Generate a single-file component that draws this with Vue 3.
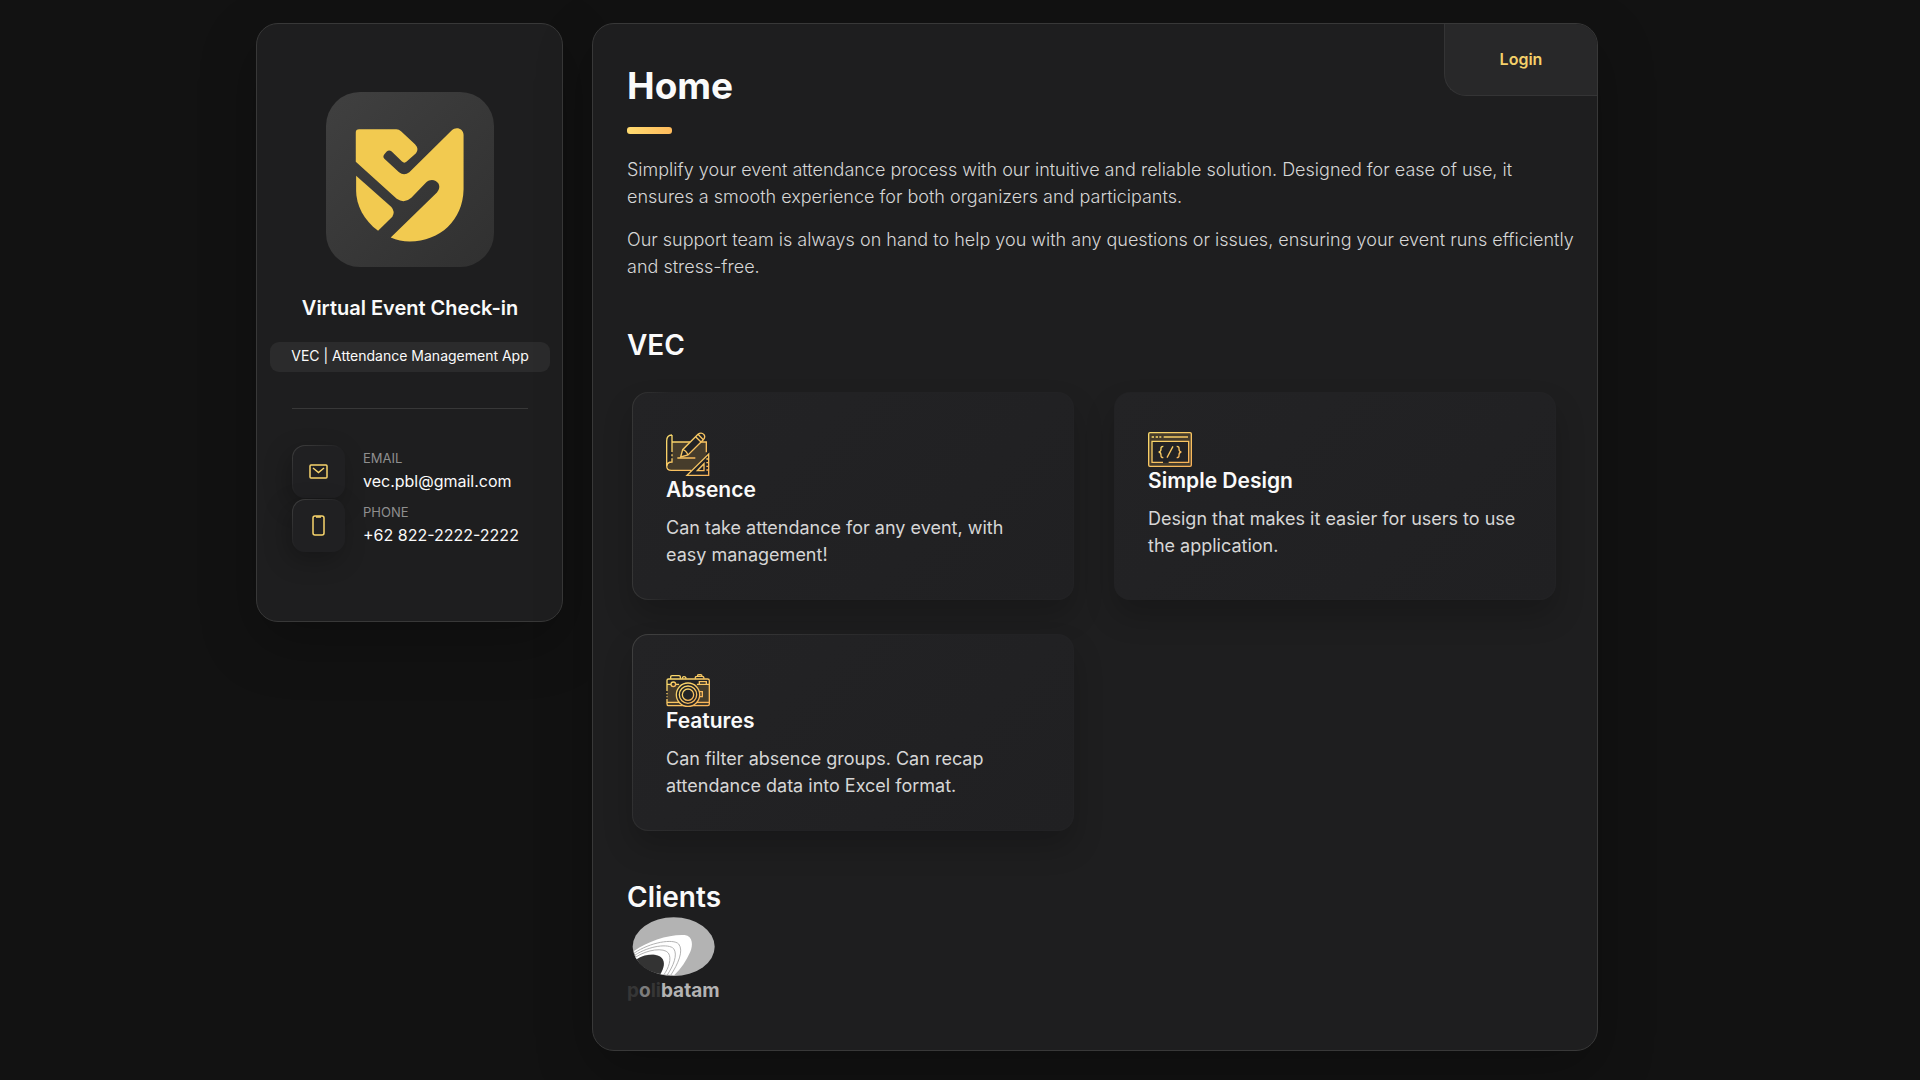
<script setup>
const contacts = [
  { kind: 'mail', label: 'Email', value: 'vec.pbl@gmail.com', href: 'mailto:vec.pbl@gmail.com' },
  { kind: 'phone', label: 'Phone', value: '+62 822-2222-2222', href: 'tel:+6282222222222' },
]

const services = [
  { icon: 'plan', title: 'Absence', text: 'Can take attendance for any event, with easy management!', edge: 'edge-left' },
  { icon: 'code', title: 'Simple Design', text: 'Design that makes it easier for users to use the application.', edge: '' },
  { icon: 'camera', title: 'Features', text: 'Can filter absence groups. Can recap attendance data into Excel format.', edge: 'edge-full' },
]
</script>

<template>
  <div class="page">
    <svg class="defs" width="0" height="0" aria-hidden="true">
      <linearGradient id="gold" x1="0" y1="0" x2="1" y2="1">
        <stop offset="0" stop-color="#f8da6c" />
        <stop offset="1" stop-color="#f8b158" />
      </linearGradient>
    </svg>

    <div class="layout">
      <aside class="panel sidebar">
        <div class="avatar">
          <svg viewBox="49 35 500 526" role="img" aria-label="VEC logo">
            <path fill="#f2ca50" d="M146 147H258Q266 147 272 153L314 192Q327 206 317 219L289 244Q282 251 275 244L244 214Q236 207 229 214L222 222Q216 229 222 236L266 276Q281 289 297 276L424 151C438 137 460 146 460 164V328C458 420 390 484 298 484Q268 484 241 472L380 337Q391 324 385 311C377 298 360 296 348 306L303 353Q282 372 259 356L136 245V157Q136 147 146 147Z" />
            <path fill="#f2ca50" d="M137 287L243 381Q255 395 246 410L203 452C160 420 137 375 137 330Z" />
          </svg>
        </div>
        <h1 class="name">Virtual Event Check-in</h1>
        <p class="tagline">VEC | Attendance Management App</p>
        <hr class="rule" />
        <ul class="contacts">
          <li v-for="c in contacts" :key="c.kind" class="contact">
            <span class="icon-box">
              <svg v-if="c.kind === 'mail'" width="19" height="15" viewBox="0 0 19 15">
                <rect x="1" y="1" width="17" height="13" rx="1" />
                <path d="M4 4L9.5 8.5L15 4" />
              </svg>
              <svg v-else width="13" height="21" viewBox="4 0 13 21">
                <rect x="5" y="1" width="11" height="19" rx="2" />
                <path d="M8 2H13" />
              </svg>
            </span>
            <span class="contact-info">
              <span class="contact-label">{{ c.label }}</span>
              <a class="contact-link" :href="c.href">{{ c.value }}</a>
            </span>
          </li>
        </ul>
      </aside>

      <main class="panel content">
        <nav class="login"><a href="#login">Login</a></nav>

        <header>
          <h2 class="title">Home</h2>
        </header>

        <section class="about">
          <p>Simplify your event attendance process with our intuitive and reliable solution. Designed for ease of use, it ensures a smooth experience for both organizers and participants.</p>
          <p>Our support team is always on hand to help you with any questions or issues, ensuring your event runs efficiently and stress-free.</p>
        </section>

        <section>
          <h3 class="subtitle">VEC</h3>
          <ul class="services">
            <li v-for="s in services" :key="s.title" class="card" :class="s.edge">
              <svg v-if="s.icon === 'plan'" class="glyph" width="44" height="44" viewBox="140 155 132 132">
                <path class="tint" d="M158 185H261V226L216 270H152L144 258L158 245Z" />
                <path d="M158 164C147 164 142 171 142 182V256C142 265 147 270 156 270H216M158 164V215M158 222V228M158 234V245C148 245 143 250 143 258M158 185H212M240 185H261V216" />
                <path class="dark" d="M184 230L190 208L236 162Q246 154 254 163Q259 171 252 178L206 224Z" />
                <path d="M190 208Q200 210 206 224M229 169L245 185M236 162L252 178M174 233H228" />
                <path class="dark" d="M268 221V285H203Z" />
                <path d="M254 250V271H234ZM261 236H266M261 247H266M261 258H266M261 269H266" />
              </svg>
              <svg v-else-if="s.icon === 'code'" class="glyph" width="44" height="35" viewBox="144 156 132 105">
                <path class="tint" fill-rule="evenodd" d="M146 158H274V259H146ZM155 184V248H266V184Z" />
                <rect x="146" y="158" width="128" height="101" rx="4" />
                <path d="M155 171H162M167 171H174M178 171H184M191 171H264M189 247H156V184H266V247H206" />
                <path d="M190 199Q182 199 183 207Q183 215 176 216Q183 217 183 225Q182 233 190 233M230 199Q238 199 237 207Q237 215 244 216Q237 217 237 225Q238 233 230 233M219 199L201 233" />
              </svg>
              <svg v-else class="glyph" width="44" height="33" viewBox="139 161 132 99">
                <path class="tint" d="M142 192H269V256H142Z" />
                <path d="M142 212V180Q142 176 147 176H264Q269 176 269 181V251Q269 256 264 256H146Q142 256 142 250V236M142 218V222M142 228V231M142 192H154M168 192H178M232 192H269M142 246H178M232 246H269" />
                <path d="M153 175V169Q153 166 157 166H178Q182 166 182 169V175M188 175Q188 169 193 169Q199 169 199 175M227 175V171Q228 168 232 168H248Q253 168 253 175M233 168Q233 163 237 163H243Q247 163 247 168M239 192V184H260V192M238 214H248V229H238" />
                <circle cx="161" cy="192" r="7" />
                <circle class="dark" cx="205" cy="223" r="35" />
                <circle cx="205" cy="223" r="26" />
                <circle cx="205" cy="223" r="17" />
              </svg>
              <h4>{{ s.title }}</h4>
              <p>{{ s.text }}</p>
            </li>
          </ul>
        </section>

        <section class="clients">
          <h3 class="subtitle">Clients</h3>
          <a class="client" href="#polibatam">
            <svg width="94" height="60" viewBox="51 171 282 180" aria-hidden="true">
              <ellipse cx="191" cy="260" rx="123" ry="88" fill="#b3b3b3" />
              <path fill="#fff" d="M72 273C112 243 180 222 224 225C250 229 249 258 241 275C229 302 213 326 193 345L152 343C166 314 164 288 135 284C115 282 96 288 80 298Z" />
              <g fill="none" stroke="#b3b3b3" stroke-width="3">
                <path d="M73 279C120 247 190 235 206 252C222 272 204 312 182 346" />
                <path d="M74 286C118 257 176 250 191 266C204 284 190 318 171 346" />
                <path d="M76 292C112 268 162 262 175 279C186 295 176 325 161 345" />
              </g>
              <path fill="#333" d="M80 298C108 280 148 280 159 299C166 313 158 330 151 342C120 337 93 322 80 298Z" />
            </svg>
            <span class="wordmark"><span class="dim">p</span><span class="mid">o</span><span class="dim">li</span>batam</span>
          </a>
        </section>
      </main>
    </div>
  </div>
</template>

<style>
body {
  margin: 0;
  background: #121212;
}
</style>

<style scoped>
* {
  box-sizing: border-box;
  margin: 0;
}
.page {
  min-height: 100vh;
  padding: 23px 66px 29px 0;
  background: #121212;
  color: #fafafa;
  font-family: Inter, "Open Sans", sans-serif;
  font-size: 16px;
}
.defs {
  position: absolute;
}
.layout {
  display: flex;
  align-items: flex-start;
  gap: 29px;
  max-width: 1342px;
  margin: 0 auto;
}
.panel {
  background: #1e1e1f;
  border: 1px solid #383838;
  border-radius: 22px;
  box-shadow: 0 20px 56px rgba(0, 0, 0, 0.25);
}
.sidebar {
  display: flex;
  flex: 0 0 307px;
  flex-direction: column;
  align-items: center;
  padding: 68px 12px 69px 13px;
}
.avatar {
  width: 168px;
  height: 175px;
  border-radius: 34px;
  background: linear-gradient(135deg, #404040, #303030);
}
.avatar svg {
  display: block;
  width: 100%;
  height: 100%;
}
.name {
  margin-top: 27px;
  font-size: 20px;
  font-weight: 600;
  line-height: 28px;
  white-space: nowrap;
}
.tagline {
  width: 100%;
  margin-top: 20px;
  border-radius: 9px;
  background: #2b2b2c;
  font-size: 14px;
  line-height: 28px;
  height: 30px;
  text-align: center;
  white-space: nowrap;
}
.rule {
  width: 236px;
  height: 1px;
  margin: 36px 0;
  border: 0;
  background: #383838;
}
.contacts {
  display: flex;
  flex-direction: column;
  gap: 1px;
  width: 236px;
  padding: 0;
  list-style: none;
}
.contact {
  display: flex;
  align-items: flex-start;
  gap: 18px;
}
.icon-box {
  display: flex;
  flex: 0 0 53px;
  align-items: center;
  justify-content: center;
  height: 53px;
  border: 1px solid transparent;
  border-radius: 13px;
  background:
    linear-gradient(#202022, #202022) padding-box,
    linear-gradient(135deg, #404040 0%, #202022 50%) border-box;
  box-shadow: -4px 8px 24px rgba(0, 0, 0, 0.25);
}
.icon-box svg {
  fill: none;
  stroke: #f7d46c;
  stroke-width: 1.5;
}
.contact-info {
  display: flex;
  flex-direction: column;
  padding-top: 1px;
}
.contact-label {
  color: #8f8f8f;
  font-size: 13px;
  line-height: 24px;
  text-transform: uppercase;
}
.contact-link {
  color: #fafafa;
  font-size: 16px;
  line-height: 22px;
  text-decoration: none;
  white-space: nowrap;
}
.content {
  position: relative;
  flex: 1 1 0;
  min-width: 0;
  padding: 38px 34px 45px;
}
.login {
  position: absolute;
  top: 0;
  right: 0;
  width: 153px;
  border: solid #343435;
  border-width: 0 0 1px 1px;
  border-radius: 0 21px 0 22px;
  background: #282829;
  text-align: center;
}
.login a {
  display: block;
  color: #f4d06a;
  font-weight: 600;
  line-height: 71px;
  text-decoration: none;
}
.title {
  font-size: 37px;
  font-weight: 700;
  line-height: 48px;
}
.title::after {
  content: "";
  display: block;
  width: 45px;
  height: 7px;
  margin-top: 17px;
  border-radius: 3px;
  background: linear-gradient(to right, #ffdb70, #ffbb5c);
}
.about {
  display: flex;
  flex-direction: column;
  gap: 16px;
  margin: 22px -16px 45px 0;
  color: #d6d6d6;
  font-size: 18px;
  font-weight: 300;
  line-height: 27px;
}
.subtitle {
  font-size: 28px;
  font-weight: 600;
  line-height: 40px;
}
.services {
  display: grid;
  grid-template-columns: 1fr 1fr;
  gap: 34px 40px;
  margin: 27px 7px 46px 5px;
  padding: 0;
  list-style: none;
}
.card {
  padding: 39px 32px 31px 33px;
  border: 1px solid transparent;
  border-radius: 16px;
  background:
    linear-gradient(135deg, #232325, #202022) padding-box,
    linear-gradient(#222224, #222224) border-box;
  box-shadow: 0 16px 30px rgba(0, 0, 0, 0.2);
}
.edge-left {
  background:
    linear-gradient(135deg, #232325, #202022) padding-box,
    linear-gradient(to right, #363636, #222224 40px) border-box;
}
.edge-full {
  background:
    linear-gradient(135deg, #232325, #202022) padding-box,
    linear-gradient(135deg, #404040, #222224 50%) border-box;
}
.glyph {
  display: block;
  fill: none;
  stroke: url(#gold);
  stroke-width: 4;
}
.glyph .tint {
  fill: #463c2b;
  stroke: none;
}
.glyph .dark {
  fill: #232325;
}
.card h4 {
  font-size: 21px;
  font-weight: 600;
  line-height: 28px;
}
.card p {
  margin-top: 10px;
  color: #d6d6d6;
  font-size: 18px;
  line-height: 27px;
}
.client {
  display: inline-flex;
  flex-direction: column;
  text-decoration: none;
}
.wordmark {
  color: #b3b3b3;
  font-size: 19px;
  font-weight: 700;
  line-height: 28px;
}
.dim {
  color: #363636;
}
.mid {
  color: #7c7c7c;
}
</style>
